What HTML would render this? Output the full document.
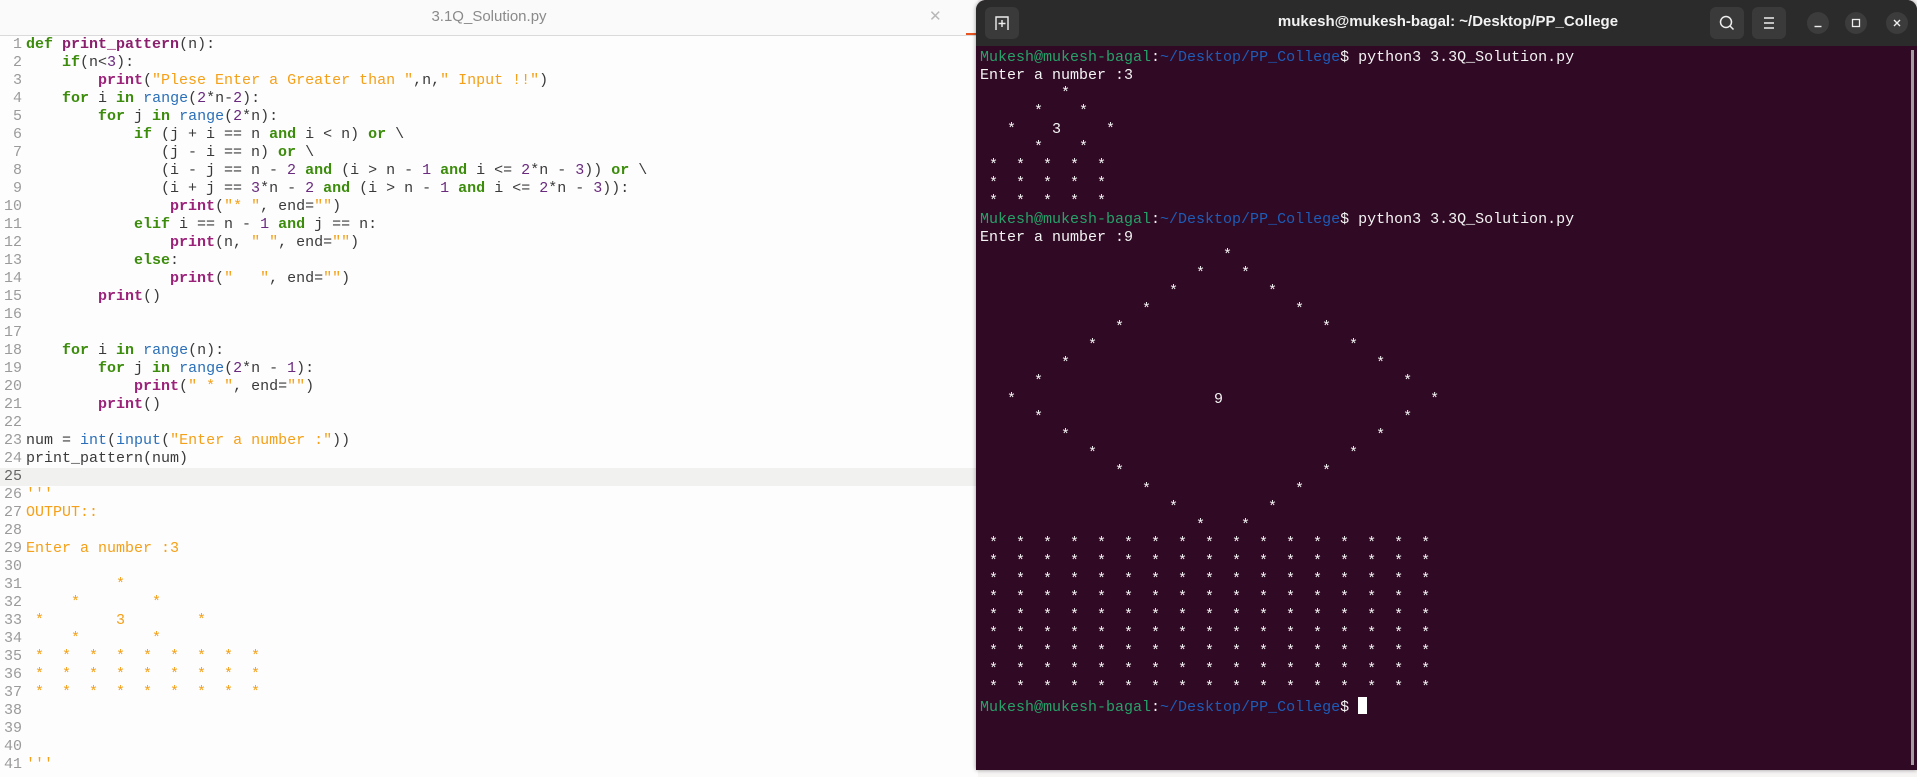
<!DOCTYPE html>
<html><head><meta charset="utf-8"><style>
html,body{margin:0;padding:0;width:1917px;height:777px;overflow:hidden;background:#f6f5f4;}
#ed{position:absolute;left:0;top:0;width:978px;height:777px;background:#fdfdfd;}
#edh{position:absolute;left:0;top:0;width:978px;height:35px;background:#fafafa;border-bottom:1px solid #dadada;}
#edh .t{position:absolute;left:0;width:978px;top:8px;text-align:center;font:15px "Liberation Sans",sans-serif;color:#8a8a8a;}
#edh .x{position:absolute;left:929px;top:7px;font:15px "Liberation Sans",sans-serif;color:#b8b8b8;}
.code{position:absolute;left:0;top:36px;font-family:"Liberation Mono",monospace;font-size:15px;line-height:18px;white-space:normal;color:#3a3a3a;}
.ln{display:block;height:18px;white-space:pre;}
.g{display:inline-block;width:22px;text-align:right;color:#9a9a9a;margin-right:4px;}
.hl{background:#f1f1f0;width:978px;}
.hl .g{color:#666;}
.k{color:#3c8c0c;font-weight:bold;}
.f{color:#9b2179;font-weight:bold;}
.fd{color:#8b1f6e;font-weight:bold;}
.b{color:#2a6fb8;}
.s{color:#f4a018;}
.n{color:#6a2b7e;}
#term{position:absolute;left:976px;top:0;width:941px;height:770px;background:#300a24;border-radius:10px 10px 0 0;overflow:hidden;box-shadow:0 0 4px rgba(0,0,0,.4);}
#th{position:absolute;left:0;top:0;width:941px;height:46px;background:#2b2b2b;}
#th .tt{position:absolute;left:0;width:944px;top:13px;text-align:center;font:bold 15px "Liberation Sans",sans-serif;color:#f2f2f2;}
.btn{position:absolute;background:#3a3a3a;border-radius:6px;}
.cir{position:absolute;background:#3c3c3c;border-radius:50%;width:22px;height:22px;top:12px;}
.tcode{position:absolute;left:4px;top:49px;font-family:"Liberation Mono",monospace;font-size:15px;line-height:18px;white-space:pre;color:#f4f4f4;}
.pg{color:#26a269;}
.pb{color:#1d5cb8;}
.cur{display:inline-block;width:9px;height:17px;background:#fff;vertical-align:-3px;}
</style></head><body>
<div id="ed">
<div id="edh"><div class="t">3.1Q_Solution.py</div><div class="x">✕</div></div>
<div class="code">
<span class="ln"><span class="g">1</span><span class="k">def</span> <span class="fd">print_pattern</span>(n):</span>
<span class="ln"><span class="g">2</span>    <span class="k">if</span>(n&lt;<span class="n">3</span>):</span>
<span class="ln"><span class="g">3</span>        <span class="f">print</span>(<span class="s">"Plese Enter a Greater than "</span>,n,<span class="s">" Input !!"</span>)</span>
<span class="ln"><span class="g">4</span>    <span class="k">for</span> i <span class="k">in</span> <span class="b">range</span>(<span class="n">2</span>*n-<span class="n">2</span>):</span>
<span class="ln"><span class="g">5</span>        <span class="k">for</span> j <span class="k">in</span> <span class="b">range</span>(<span class="n">2</span>*n):</span>
<span class="ln"><span class="g">6</span>            <span class="k">if</span> (j + i == n <span class="k">and</span> i &lt; n) <span class="k">or</span> \</span>
<span class="ln"><span class="g">7</span>               (j - i == n) <span class="k">or</span> \</span>
<span class="ln"><span class="g">8</span>               (i - j == n - <span class="n">2</span> <span class="k">and</span> (i &gt; n - <span class="n">1</span> <span class="k">and</span> i &lt;= <span class="n">2</span>*n - <span class="n">3</span>)) <span class="k">or</span> \</span>
<span class="ln"><span class="g">9</span>               (i + j == <span class="n">3</span>*n - <span class="n">2</span> <span class="k">and</span> (i &gt; n - <span class="n">1</span> <span class="k">and</span> i &lt;= <span class="n">2</span>*n - <span class="n">3</span>)):</span>
<span class="ln"><span class="g">10</span>                <span class="f">print</span>(<span class="s">"* "</span>, end=<span class="s">""</span>)</span>
<span class="ln"><span class="g">11</span>            <span class="k">elif</span> i == n - <span class="n">1</span> <span class="k">and</span> j == n:</span>
<span class="ln"><span class="g">12</span>                <span class="f">print</span>(n, <span class="s">" "</span>, end=<span class="s">""</span>)</span>
<span class="ln"><span class="g">13</span>            <span class="k">else</span>:</span>
<span class="ln"><span class="g">14</span>                <span class="f">print</span>(<span class="s">"   "</span>, end=<span class="s">""</span>)</span>
<span class="ln"><span class="g">15</span>        <span class="f">print</span>()</span>
<span class="ln"><span class="g">16</span></span>
<span class="ln"><span class="g">17</span></span>
<span class="ln"><span class="g">18</span>    <span class="k">for</span> i <span class="k">in</span> <span class="b">range</span>(n):</span>
<span class="ln"><span class="g">19</span>        <span class="k">for</span> j <span class="k">in</span> <span class="b">range</span>(<span class="n">2</span>*n - <span class="n">1</span>):</span>
<span class="ln"><span class="g">20</span>            <span class="f">print</span>(<span class="s">" * "</span>, end=<span class="s">""</span>)</span>
<span class="ln"><span class="g">21</span>        <span class="f">print</span>()</span>
<span class="ln"><span class="g">22</span></span>
<span class="ln"><span class="g">23</span>num = <span class="b">int</span>(<span class="b">input</span>(<span class="s">"Enter a number :"</span>))</span>
<span class="ln"><span class="g">24</span>print_pattern(num)</span>
<span class="ln hl"><span class="g">25</span></span>
<span class="ln"><span class="g">26</span><span class="s">'''</span></span>
<span class="ln"><span class="g">27</span><span class="s">OUTPUT::</span></span>
<span class="ln"><span class="g">28</span></span>
<span class="ln"><span class="g">29</span><span class="s">Enter a number :3</span></span>
<span class="ln"><span class="g">30</span></span>
<span class="ln"><span class="g">31</span><span class="s">          *</span></span>
<span class="ln"><span class="g">32</span><span class="s">     *        *</span></span>
<span class="ln"><span class="g">33</span><span class="s"> *        3        *</span></span>
<span class="ln"><span class="g">34</span><span class="s">     *        *</span></span>
<span class="ln"><span class="g">35</span><span class="s"> *  *  *  *  *  *  *  *  *</span></span>
<span class="ln"><span class="g">36</span><span class="s"> *  *  *  *  *  *  *  *  *</span></span>
<span class="ln"><span class="g">37</span><span class="s"> *  *  *  *  *  *  *  *  *</span></span>
<span class="ln"><span class="g">38</span></span>
<span class="ln"><span class="g">39</span></span>
<span class="ln"><span class="g">40</span></span>
<span class="ln"><span class="g">41</span><span class="s">'''</span></span>
</div>
</div>
<div style="position:absolute;left:966px;top:33px;width:12px;height:2px;background:#e95420"></div>
<div id="term">
<div id="th">
<div class="btn" style="left:9px;top:7px;width:34px;height:32px;"><svg width="34" height="32" viewBox="0 0 34 32"><path d="M11 23 V10 H23 V23 M17 13 V20 M13.5 16.5 H20.5" fill="none" stroke="#eee" stroke-width="1.4"/></svg></div>
<div class="tt">mukesh@mukesh-bagal: ~/Desktop/PP_College</div>
<div class="btn" style="left:734px;top:7px;width:34px;height:32px;"><svg width="34" height="32" viewBox="0 0 34 32"><circle cx="16" cy="15" r="5.5" fill="none" stroke="#eee" stroke-width="1.5"/><path d="M20 19 L23.5 22.5" stroke="#eee" stroke-width="1.5"/></svg></div>
<div class="btn" style="left:776px;top:7px;width:34px;height:32px;"><svg width="34" height="32" viewBox="0 0 34 32"><path d="M12 11H22M12 16H22M12 21H22" stroke="#eee" stroke-width="1.5"/></svg></div>
<div class="cir" style="left:831px;"><svg width="22" height="22"><path d="M7.5 14.5H14.5" stroke="#eee" stroke-width="1.4"/></svg></div>
<div class="cir" style="left:869px;"><svg width="22" height="22"><rect x="7.5" y="7.5" width="7" height="7" fill="none" stroke="#eee" stroke-width="1.3"/></svg></div>
<div class="cir" style="left:910px;"><svg width="22" height="22"><path d="M8 8L14 14M14 8L8 14" stroke="#eee" stroke-width="1.4"/></svg></div>
</div>
<div style="position:absolute;right:3px;top:50px;width:3px;height:715px;background:#d8d8d8;opacity:.7"></div>
<div class="tcode"><span class="pg">Mukesh@mukesh-bagal</span>:<span class="pb">~/Desktop/PP_College</span>$ python3 3.3Q_Solution.py
Enter a number :3
         *
      *    *
   *    3     *
      *    *
 *  *  *  *  *
 *  *  *  *  *
 *  *  *  *  *
<span class="pg">Mukesh@mukesh-bagal</span>:<span class="pb">~/Desktop/PP_College</span>$ python3 3.3Q_Solution.py
Enter a number :9
                           *
                        *    *
                     *          *
                  *                *
               *                      *
            *                            *
         *                                  *
      *                                        *
   *                      9                       *
      *                                        *
         *                                  *
            *                            *
               *                      *
                  *                *
                     *          *
                        *    *
 *  *  *  *  *  *  *  *  *  *  *  *  *  *  *  *  *
 *  *  *  *  *  *  *  *  *  *  *  *  *  *  *  *  *
 *  *  *  *  *  *  *  *  *  *  *  *  *  *  *  *  *
 *  *  *  *  *  *  *  *  *  *  *  *  *  *  *  *  *
 *  *  *  *  *  *  *  *  *  *  *  *  *  *  *  *  *
 *  *  *  *  *  *  *  *  *  *  *  *  *  *  *  *  *
 *  *  *  *  *  *  *  *  *  *  *  *  *  *  *  *  *
 *  *  *  *  *  *  *  *  *  *  *  *  *  *  *  *  *
 *  *  *  *  *  *  *  *  *  *  *  *  *  *  *  *  *
<span class="pg">Mukesh@mukesh-bagal</span>:<span class="pb">~/Desktop/PP_College</span>$ <span class="cur"></span></div>
</div>
</body></html>
